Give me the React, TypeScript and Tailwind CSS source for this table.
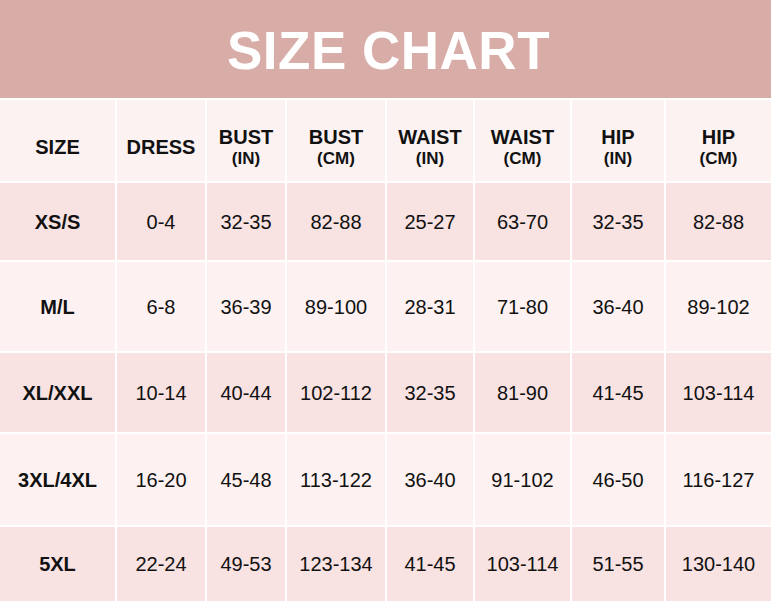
const headers: [string, string?][] = [
  ["SIZE"],
  ["DRESS"],
  ["BUST", "(IN)"],
  ["BUST", "(CM)"],
  ["WAIST", "(IN)"],
  ["WAIST", "(CM)"],
  ["HIP", "(IN)"],
  ["HIP", "(CM)"],
];

const rows = [
  { h: "h-[77px]", cells: ["XS/S", "0-4", "32-35", "82-88", "25-27", "63-70", "32-35", "82-88"] },
  { h: "h-[89px]", cells: ["M/L", "6-8", "36-39", "89-100", "28-31", "71-80", "36-40", "89-102"] },
  { h: "h-[79px]", cells: ["XL/XXL", "10-14", "40-44", "102-112", "32-35", "81-90", "41-45", "103-114"] },
  { h: "h-[91px]", cells: ["3XL/4XL", "16-20", "45-48", "113-122", "36-40", "91-102", "46-50", "116-127"] },
  { h: "h-[74px]", cells: ["5XL", "22-24", "49-53", "123-134", "41-45", "103-114", "51-55", "130-140"] },
];

const cols = "grid grid-cols-[115px_88px_78px_98px_86px_95px_92px_105px] gap-x-[2px]";

export default function App() {
  return (
    <div className="w-[771px] h-[601px] bg-white overflow-hidden font-['Liberation_Sans',Arial,sans-serif] text-[#111]">
      {/* タイトル */}
      <div className="h-[98px] bg-[#d8aca7] flex items-center justify-center">
        <h1 className="text-white font-bold text-[53px] leading-none tracking-[0.5px] mt-[2px] ml-[6px]">
          SIZE CHART
        </h1>
      </div>

      <div className="flex flex-col gap-y-[2px] pt-[2px]">
        {/* 見出し行 */}
        <div className={`${cols} h-[81px]`}>
          {headers.map(([main, sub], i) => (
            <div
              key={i}
              className="bg-[#fdf2f2] flex flex-col items-center justify-center pt-[13px] font-bold"
            >
              <span className="text-[20px] leading-[22px]">{main}</span>
              {sub && <span className="text-[17px] leading-[21px]">{sub}</span>}
            </div>
          ))}
        </div>

        {/* データ行 */}
        {rows.map((row, r) => (
          <div key={r} className={`${cols} ${row.h}`}>
            {row.cells.map((c, i) => (
              <div
                key={i}
                className={`flex items-center justify-center text-[20px] ${
                  r % 2 === 0 ? "bg-[#f9e2e2]" : "bg-[#fdf1f1]"
                } ${i === 0 ? "font-bold" : ""}`}
              >
                {c}
              </div>
            ))}
          </div>
        ))}
      </div>
    </div>
  );
}
